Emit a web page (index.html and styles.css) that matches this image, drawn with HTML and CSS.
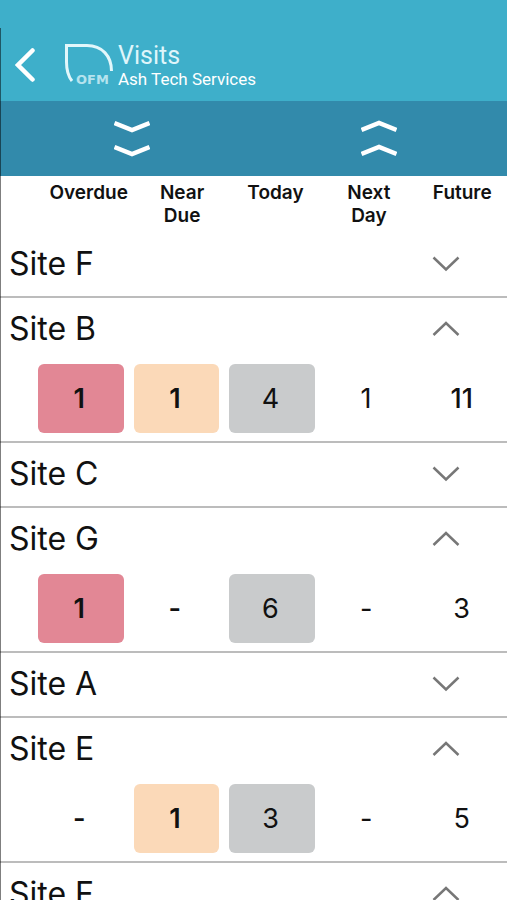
FILE: index.html
```html
<!DOCTYPE html>
<html lang="en">
<head>
<meta charset="utf-8">
<meta name="viewport" content="width=device-width, initial-scale=1">
<title>Visits</title>
<link rel="stylesheet" href="styles.css">
</head>
<body>
<svg class="symbols" aria-hidden="true">
  <symbol id="down" viewBox="0 0 28 16"><path d="M1.5 1.5 14 13.5 26.5 1.5"/></symbol>
  <symbol id="up" viewBox="0 0 28 16"><path d="M1.5 14 14 2 26.5 14"/></symbol>
</svg>
<header class="topbar">
  <button class="back" type="button" aria-label="Back">
    <svg width="20" height="36" viewBox="0 0 20 36"><path d="M17.500 3.500 3 18 17.500 32.500"/></svg>
  </button>
  <svg class="logo" width="50" height="46" viewBox="0 0 50 46" role="img" aria-label="OFM">
    <path d="M8 39C4 34 2.500 28 2.500 20V3.500H23C38 3.500 47.500 14 47.500 29" fill="none" stroke="currentColor" stroke-width="3"/>
    <text x="12" y="42">OFM</text>
  </svg>
  <div class="titles">
    <h1>Visits</h1>
    <p>Ash Tech Services</p>
  </div>
</header>
<div class="toolbar">
  <button type="button" aria-label="Expand all">
    <svg width="36" height="38" viewBox="0 0 36 38"><path d="M.5 3 18 10 35.500 3M.5 27 18 34 35.500 27"/></svg>
  </button>
  <button type="button" aria-label="Collapse all">
    <svg width="36" height="38" viewBox="0 0 36 38"><path d="M.5 10 18 3 35.500 10M.5 34 18 27 35.500 34"/></svg>
  </button>
</div>
<main>
<table>
  <thead>
    <tr class="columns">
      <th scope="col">Overdue</th><th scope="col">Near Due</th><th scope="col">Today</th><th scope="col">Next Day</th><th scope="col">Future</th>
    </tr>
  </thead>
  <tbody>
    <tr class="site"><th scope="rowgroup"><button type="button" aria-expanded="false">Site F<svg class="chevron"><use href="#down"/></svg></button></th></tr>
  </tbody>
  <tbody>
    <tr class="site"><th scope="rowgroup"><button type="button" aria-expanded="true">Site B<svg class="chevron"><use href="#up"/></svg></button></th></tr>
    <tr class="counts"><td class="strong overdue">1</td><td class="strong near">1</td><td class="today">4</td><td>1</td><td class="future">11</td></tr>
  </tbody>
  <tbody>
    <tr class="site"><th scope="rowgroup"><button type="button" aria-expanded="false">Site C<svg class="chevron"><use href="#down"/></svg></button></th></tr>
  </tbody>
  <tbody>
    <tr class="site"><th scope="rowgroup"><button type="button" aria-expanded="true">Site G<svg class="chevron"><use href="#up"/></svg></button></th></tr>
    <tr class="counts"><td class="strong overdue">1</td><td class="strong">-</td><td class="today">6</td><td>-</td><td>3</td></tr>
  </tbody>
  <tbody>
    <tr class="site"><th scope="rowgroup"><button type="button" aria-expanded="false">Site A<svg class="chevron"><use href="#down"/></svg></button></th></tr>
  </tbody>
  <tbody>
    <tr class="site"><th scope="rowgroup"><button type="button" aria-expanded="true">Site E<svg class="chevron"><use href="#up"/></svg></button></th></tr>
    <tr class="counts"><td class="strong">-</td><td class="strong near">1</td><td class="today">3</td><td>-</td><td>5</td></tr>
  </tbody>
  <tbody>
    <tr class="site"><th scope="rowgroup"><button type="button" aria-expanded="true">Site F<svg class="chevron"><use href="#up"/></svg></button></th></tr>
  </tbody>
</table>
</main>
</body>
</html>
```
FILE: styles.css
```css
* { box-sizing: border-box; }

body {
  margin: 0;
  height: 100vh;
  display: flex;
  flex-direction: column;
  overflow: hidden;
  background: #fff;
  color: #111;
  font-family: Inter, "Liberation Sans", sans-serif;
}

/* Hairline along the left edge of the screen */
body::before {
  content: "";
  position: absolute;
  top: 28px;
  bottom: 0;
  left: 0;
  width: 1px;
  background: rgb(0 0 0 / 50%);
}

button {
  border: 0;
  padding: 0;
  background: none;
  color: inherit;
  font: inherit;
  cursor: pointer;
}

svg { display: block; flex: none; }
.symbols { position: absolute; width: 0; height: 0; }

.topbar {
  flex: none;
  display: flex;
  align-items: flex-start;
  padding: 42px 16px 13px 15px;
  background: #3eafca;
  color: #fff;
}
.back { margin-top: 5px; }
.back path { fill: none; stroke: #fff; stroke-width: 4.5; stroke-linecap: round; }
.logo { margin-left: 29px; color: #e2f7fb; }
.logo text { font: bold 13px "DejaVu Sans", sans-serif; fill: #b5e3ee; }
.titles {
  margin-left: 4px;
  font-family: Roboto, sans-serif;
}
.titles h1 {
  margin: 0;
  font-size: 25px;
  line-height: 28px;
  font-weight: 400;
  color: #dff5fa;
}
.titles p { margin: 0; font-size: 17px; line-height: 18px; }

.toolbar {
  flex: none;
  display: grid;
  grid-template-columns: 1fr 1fr;
  padding: 0 4px 0 8px;
  background: #328aab;
}
.toolbar button { height: 75px; display: flex; align-items: center; justify-content: center; }
.toolbar path { fill: none; stroke: #fff; stroke-width: 4.5; }

main { flex: 1; min-height: 0; overflow-y: auto; scrollbar-width: none; }
table, thead, tbody, .site, .site th { display: block; }

.columns {
  display: grid;
  grid-template-columns: repeat(5, minmax(0, 1fr));
  gap: 10px;
  height: 57px;
  padding: 5px 3px 0 47px;
}
.columns th {
  padding: 0;
  display: flex;
  justify-content: center;
  font-size: 19px;
  line-height: 23px;
  font-weight: 600;
}
.columns th:nth-child(even) { padding: 0 16px; }

tbody { border-bottom: 2px solid #bcbcbc; }
.site th { padding: 0 0 2px; font-weight: 400; }
.site button {
  width: 100%;
  height: 61px;
  display: flex;
  align-items: center;
  justify-content: space-between;
  padding: 0 47px 0 9px;
  font-size: 32px;
}
.chevron { width: 28px; height: 16px; fill: none; stroke: #777; stroke-width: 2.5; }

.counts {
  display: grid;
  grid-template-columns: repeat(5, minmax(0, 1fr));
  gap: 10px;
  padding: 3px 1px 8px 38px;
}
.counts td {
  height: 69px;
  display: flex;
  align-items: center;
  justify-content: center;
  padding: 0 3px 0 0;
  border-radius: 6px;
  font-size: 27px;
}
.counts .strong { font-weight: 600; }
.counts .future { font-weight: 500; }
.overdue { background: #e28795; }
.near { background: #fbd9b8; }
.today { background: #c9cbcc; }
```
